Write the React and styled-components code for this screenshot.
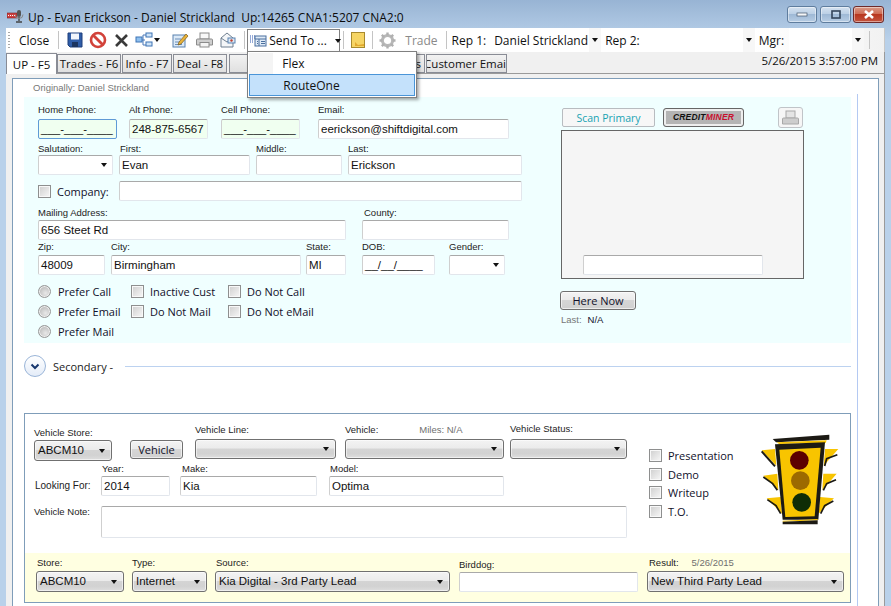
import React from 'react';
import styled, { createGlobalStyle } from 'styled-components';

const Global = createGlobalStyle`
  html, body { margin: 0; padding: 0; background: #b9d1ea; overflow: hidden; }
  * { box-sizing: border-box; }
`;
const UI = '"Open Sans", "Noto Sans", sans-serif';
const ARIAL = '"Liberation Sans", Arial, sans-serif';

const Win = styled.div`
  width: 891px; height: 606px; overflow: hidden; display: flex; flex-direction: column;
  background: linear-gradient(#98b4d4 0, #b9d1ea 40px);
  font-family: ${UI}; color: #111;
`;
const TitleBar = styled.div`
  height: 28px; flex: none; display: flex; align-items: center; padding: 5px 7px 0 7px;
`;
const TitleText = styled.div`
  font-size: 12px; margin-left: 4px; white-space: pre; flex: 1; color: #0b0b0b; padding-top: 1px;
`;
const Caption = styled.div`
  width: ${p => p.$w}px; height: 17px; margin-left: ${p => p.$ml}px; margin-top: -5px; border-radius: 3px;
  border: 1px solid ${p => p.$close ? '#6e2a2a' : '#5f7d9e'};
  box-shadow: inset 0 0 0 1px rgba(255,255,255,.45);
  background: ${p => p.$close
    ? 'linear-gradient(#d99a88 0,#cf6d55 45%,#b8371f 50%,#c4543e 100%)'
    : 'linear-gradient(#d5e2f0 0,#bcd0e6 45%,#9fb9d6 50%,#b7cde4 100%)'};
  display: flex; align-items: center; justify-content: center;
`;
const Toolbar = styled.div`
  height: 24px; flex: none; margin: 0 6px; display: flex; align-items: center; padding-left: 2px;
  background: linear-gradient(90deg,#fff 0,#fff 85%,#f2f2f2 100%);
  font-size: 12px; border-right: 1px solid #c8c8c8; position: relative; z-index: 3;
`;
const Grip = styled.div`
  width: 2px; height: 16px; margin-right: 9px;
  background: repeating-linear-gradient(#a8a8a8 0,#a8a8a8 1px,transparent 1px,transparent 3px);
`;
const Sep = styled.div`
  width: 1px; height: 18px; background: #c4c4c4; flex: none; margin-left: ${p => p.$ml}px;
`;
const ToolText = styled.span`
  margin-left: ${p => p.$ml}px; white-space: nowrap; color: ${p => p.$off ? '#8a8a8a' : '#111'};
`;
const ToolIcon = styled.svg`
  flex: none; margin-left: ${p => p.$ml}px; display: block;
`;
const SendWrap = styled.div`
  position: relative; margin-left: 2px; width: 93px; height: 23px; margin-top: 1px;
  border: 1px solid #808080; border-bottom-color: #f0f0f0; background: #fff;
  display: flex; align-items: center; padding-left: 2px; z-index: 5;
`;
const Arrow = styled.i`
  display: block; flex: none; width: 0; height: 0; margin-left: ${p => p.$ml || 0}px;
  border-left: 3.5px solid transparent; border-right: 3.5px solid transparent; border-top: 4px solid #111;
`;
const Menu = styled.div`
  position: absolute; left: -1px; top: 21px; width: 170px; height: 47px; background: #fff;
  border: 1px solid #808080; box-shadow: 2px 2px 3px rgba(0,0,0,.35); padding: 1px;
  font-size: 12px; display: flex; flex-direction: column;
`;
const MenuItem = styled.div`
  height: ${p => p.$h}px; padding-left: 33px; display: flex; align-items: center;
  ${p => p.$on ? 'background:#c4e1fb;border:1px solid #4a95d8;' : 'background:linear-gradient(90deg,#f4f4f4 0,#f4f4f4 24px,#fff 24px);'}
`;
const Combo = styled.div`
  margin-left: ${p => p.$ml}px; width: ${p => p.$w}px; height: 24px; background: #fff; flex: none;
  padding-left: 3px; display: flex; align-items: center; white-space: nowrap;
`;
const ComboArrow = styled.div`
  width: ${p => p.$w || 12}px; height: 24px; background: #f7f7f7; flex: none;
  display: flex; align-items: center; justify-content: center;
`;

const Body = styled.div`
  flex: 1; margin: 0 6px; background: #f0f0f0; display: flex; flex-direction: column; min-height: 0;
  border-right: 1px solid #9a9a9a;
`;
const TabRow = styled.div`
  height: 21px; flex: none; display: flex; align-items: flex-end; position: relative; padding-top: 1px;
`;
const Tab = styled.div`
  flex: none; width: ${p => p.$w}px; margin-left: ${p => p.$ml || 0}px;
  height: ${p => p.$on ? 21 : 19}px; margin-bottom: ${p => p.$on ? -1 : 0}px;
  border: 1px solid #898c95; border-bottom: ${p => p.$on ? 'none' : '1px solid #898c95'};
  background: ${p => p.$on ? '#fff' : 'linear-gradient(#f2f2f2,#e0e0e0)'};
  font-size: 11.5px; display: flex; align-items: center; justify-content: ${p => p.$end ? 'flex-end' : 'center'};
  padding-right: ${p => p.$end ? 3 : 0}px;
  white-space: nowrap; position: relative; z-index: ${p => p.$on ? 2 : 1}; overflow: hidden;
`;
const Stamp = styled.div`
  margin-left: auto; margin-right: 6px; font-size: 11.5px; height: 20px; line-height: 16px;
`;
const PageFrame = styled.div`
  flex: 1; min-height: 0; border-top: 1px solid #9a9a9a; padding: 4px 5px 0 6px;
`;
const Page = styled.div`
  height: 100%; border: 1px solid #7f9db9; border-bottom: none; background: #fff; padding-right: 20px; overflow: hidden;
`;
const Original = styled.div`
  height: 15px; padding: 3px 0 0 20px; font: 9.5px/11px ${ARIAL}; color: #777;
`;
const Column = styled.div`
  border-right: 1px solid #b4c9f2; padding: 3px 6px 0 11px; height: 100%;
`;
const Panel = styled.div`
  display: flex; height: 246px; background: #f0ffff;
`;
const Left = styled.div`
  width: 550px; padding: 7px 0 0 14px; flex: none; display: flex; flex-direction: column;
`;
const Row = styled.div`
  display: flex; align-items: flex-start; margin-top: ${p => p.$mt || 0}px;
  margin-left: ${p => p.$ml || 0}px; height: ${p => p.$h ? p.$h + 'px' : 'auto'};
`;
const Field = styled.div`
  width: ${p => p.$w}px; flex: none; margin-left: ${p => p.$ml || 0}px; margin-top: ${p => p.$mt || 0}px;
  display: flex; flex-direction: column;
`;
const Label = styled.div`
  font: 9.5px/12px ${ARIAL}; height: 12px; white-space: nowrap; color: #1c1c1c;
  margin-bottom: ${p => p.$gap || 0}px; padding-left: ${p => p.$pl || 0}px;
  display: flex;
`;
const Muted = styled.span`
  color: #6f6f6f; margin-left: ${p => p.$ml}px;
`;
const Input = styled.div`
  height: ${p => p.$h || 20}px; width: ${p => p.$w ? p.$w + 'px' : 'auto'}; flex: none;
  margin-left: ${p => p.$ml || 0}px;
  background: ${p => p.$mint ? '#f0fff0' : '#fff'};
  border: 1px solid ${p => p.$focus ? '#5f9ad6' : '#e2e6ec'};
  border-top-color: ${p => p.$focus ? '#5f9ad6' : '#a9a9a9'};
  border-left-color: ${p => p.$focus ? '#5f9ad6' : '#cfcfcf'};
  border-radius: 2px; padding: 0 2px;
  font: 11.5px/18px ${ARIAL}; color: #111; white-space: nowrap; overflow: hidden;
`;
const DropBox = styled(Input)`
  display: flex; justify-content: flex-end; align-items: center; padding-right: 5px;
`;
const Select = styled.div`
  height: ${p => p.$h || 21}px; border: 1px solid #707070; border-radius: 3px; flex: none;
  background: linear-gradient(#f3f3f3 0,#ebebeb 45%,#d4d4d4 50%,#d2d2d2 75%,#dedede 100%);
  box-shadow: inset 0 0 0 1px rgba(255,255,255,.55);
  display: flex; align-items: center; justify-content: space-between; padding: 0 6px 0 3px;
  font: 11.5px/1 ${ARIAL}; color: #111; white-space: nowrap;
`;
const Inline = styled.div`
  display: flex; align-items: center; flex: none; font-size: 11px; height: ${p => p.$h || 20}px;
  width: ${p => p.$w ? p.$w + 'px' : 'auto'}; margin-left: ${p => p.$ml || 0}px; margin-top: ${p => p.$mt || 0}px;
  white-space: nowrap; color: #10102a;
`;
const InlineText = styled.span` margin-left: ${p => p.$ml}px; `;
const Check = styled.span`
  width: 13px; height: 13px; flex: none; display: block; border: 1px solid #8e8f8f; padding: 1px;
  background: #f8f8f8;
  &::before { content: ''; display: block; width: 100%; height: 100%; background: linear-gradient(135deg,#d2d2d2,#f4f4f4); }
`;
const Radio = styled.span`
  width: 13px; height: 13px; flex: none; display: block; border-radius: 50%; border: 1px solid #979797;
  background: radial-gradient(circle at 60% 65%,#e8e8e8 0,#c4c4c4 60%,#b4b4b4 100%);
  box-shadow: inset 0 0 0 1px #eee;
`;
const Right = styled.div`
  width: 246px; flex: none; margin-left: -14px; padding-top: 10px; display: flex; flex-direction: column;
`;
const ScanRow = styled.div`
  display: flex; align-items: center; height: 21px; padding-left: 2px;
`;
const ScanBtn = styled.div`
  width: 93px; height: 19px; border: 1px solid #b8bcc0; border-radius: 2px; background: #f7f7f7;
  color: #17a3b3; font-size: 10.5px; display: flex; align-items: center; justify-content: center;
`;
const MinerBtn = styled.div`
  width: 81px; height: 19px; margin-left: 8px; border: 1px solid #666; border-radius: 3px; background: #b4b4b4;
  box-shadow: inset 0 0 0 2px #eee;
  display: flex; align-items: center; justify-content: center;
  font: italic 900 8.5px/1 ${ARIAL}; color: #111; letter-spacing: .2px;
`;
const MinerRed = styled.span` color: #c8102e; `;
const PrintBtn = styled.div`
  width: 25px; height: 21px; margin-left: 34px; border: 1px solid #c0c4c8; border-radius: 3px; background: #f6f6f6;
  display: flex; align-items: center; justify-content: center;
`;
const ScanBox = styled.div`
  width: 243px; height: 149px; margin: 2px 0 0 1px; border: 1px solid #666; background: #f5f5f5;
  display: flex; align-items: flex-end; padding: 0 0 3px 21px;
`;
const HereNow = styled.div`
  width: 76px; height: 19px; margin-top: 12px; border: 1px solid #707070; border-radius: 3px;
  background: linear-gradient(#f3f3f3 0,#ebebeb 45%,#d6d6d6 50%,#d0d0d0 100%);
  box-shadow: inset 0 0 0 1px rgba(255,255,255,.6);
  display: flex; align-items: center; justify-content: center; font-size: 11px; color: #10102a;
`;
const LastLine = styled.div`
  font: 9.5px/12px ${ARIAL}; margin: 4px 0 0 1px; color: #777; display: flex;
`;
const LastVal = styled.span` color: #10102a; margin-left: 6px; `;
const SecRow = styled.div`
  height: 46px; display: flex; align-items: center; font-size: 11px; color: #222;
`;
const Expand = styled.div`
  width: 22px; height: 22px; border-radius: 50%; border: 1px solid #9ab5d8; flex: none;
  background: linear-gradient(#fff,#e4ecf8); display: flex; align-items: center; justify-content: center;
`;
const SecText = styled.span` margin-left: 7px; `;
const SecLine = styled.div` flex: 1; height: 1px; background: #bcd2f0; margin-left: 12px; `;
const Group = styled.div`
  margin-top: 24px; height: 190px; border: 1px solid #7f9db9; display: flex; flex-direction: column;
`;
const GroupTop = styled.div` height: 139px; flex: none; display: flex; `;
const GroupForm = styled.div`
  width: 602px; flex: none; padding: 9px 0 0 9px; display: flex; flex-direction: column;
`;
const Checks = styled.div`
  width: 111px; flex: none; margin-left: 22px; padding-top: 32px; display: flex; flex-direction: column;
`;
const Light = styled.svg`
  flex: none; width: 80px; height: 94px; margin-top: 19px; display: block;
`;
const Band = styled.div`
  flex: 1; background: #ffffe1; padding: 4px 0 0 11px; display: flex; align-items: flex-start;
`;

const Ic = {
  Save: () => <ToolIcon $ml={8} width="16" height="16" viewBox="0 0 16 16"><path d="M1 1h14v14H3l-2-2z" fill="#2f5da8" stroke="#1e3f7a"/><rect x="4" y="1.5" width="8" height="6" fill="#f2f6fc"/><rect x="5" y="10" width="6" height="5" fill="#1c3560"/></ToolIcon>,
  No: () => <ToolIcon $ml={6} width="18" height="18" viewBox="0 0 18 18"><circle cx="9" cy="9" r="7" fill="#fff" stroke="#d2423a" strokeWidth="2.6"/><path d="M4 4l10 10" stroke="#d2423a" strokeWidth="2.8"/></ToolIcon>,
  X: () => <ToolIcon $ml={7} width="15" height="15" viewBox="0 0 15 15"><path d="M2 2l11 11M13 2L2 13" stroke="#3a3a3a" strokeWidth="2.6"/></ToolIcon>,
  Flow: () => <ToolIcon $ml={6} width="18" height="16" viewBox="0 0 18 16"><path d="M6 8h4M8 3v10M8 3h3M8 13h3" stroke="#4a78b8" fill="none"/><rect x="1" y="5" width="6" height="5" fill="#8fc0ef" stroke="#3f74b5"/><rect x="11" y="1" width="6" height="4" fill="#cfe4f8" stroke="#3f74b5"/><rect x="11" y="10" width="6" height="4" fill="#cfe4f8" stroke="#3f74b5"/></ToolIcon>,
  Edit: () => <ToolIcon $ml={12} width="17" height="16" viewBox="0 0 17 16"><rect x="1" y="3" width="12" height="12" fill="#dbe9f7" stroke="#5a82b0"/><path d="M3 7h6M3 10h5M3 12.5h7" stroke="#6d8fb8"/><path d="M7 10l7-8 2 2-7 8-3 1z" fill="#e8b23a" stroke="#7a5a18" strokeWidth=".7"/></ToolIcon>,
  Print: ({ ml = 7 }) => <ToolIcon $ml={ml} width="17" height="16" viewBox="0 0 17 16"><rect x="4" y="1" width="9" height="6" fill="#f8f8f8" stroke="#8b8b8b"/><path d="M1.5 7h14a1 1 0 0 1 1 1v5h-16V8a1 1 0 0 1 1-1z" fill="#cfcfcf" stroke="#8b8b8b"/><rect x="4" y="10.5" width="9" height="4.5" fill="#f4f4f4" stroke="#8b8b8b"/></ToolIcon>,
  Mail: () => <ToolIcon $ml={6} width="17" height="16" viewBox="0 0 17 16"><path d="M2 6l6-5 6 5v9H2z" fill="#f4f6f8" stroke="#6f7f90"/><path d="M2 6l6 4 6-4" fill="none" stroke="#6f7f90"/><rect x="9" y="6" width="7" height="5" fill="#dce8f4" stroke="#5a82b0"/><circle cx="12.5" cy="8.5" r="1.2" fill="#c04030"/></ToolIcon>,
  Send: () => <ToolIcon $ml={0} width="17" height="12" viewBox="0 0 17 12"><path d="M0 1h1M2 1h1M4 1h1M0 3h1M2 3h1M4 3h1M0 5h1M2 5h1M0 7h1M2 7h1" stroke="#2b55b0" /><rect x="5" y="1" width="11" height="10" fill="#dfeaf6" stroke="#4a6f9e"/><path d="M5 4h11M9 4v7M7 6.5h1M7 8.5h1M11 6.5h4M11 8.5h4" stroke="#4a6f9e"/></ToolIcon>,
  Note: () => <ToolIcon $ml={7} width="14" height="16" viewBox="0 0 14 16"><rect x=".5" y=".5" width="13" height="15" fill="#f6d565" stroke="#a88a2e"/><path d="M4 10l3 3 6-1v2H4z" fill="#e2a92e"/></ToolIcon>,
  Gear: () => <ToolIcon $ml={6} width="17" height="17" viewBox="0 0 17 17"><path d="M8.5 3.4a5.1 5.1 0 1 0 0 10.2 5.1 5.1 0 0 0 0-10.2z" fill="none" stroke="#b8b8b8" strokeWidth="3"/><path d="M8.5 0.5v3M8.5 13.5v3M0.5 8.5h3M13.5 8.5h3M2.8 2.8l2.2 2.2M12 12l2.2 2.2M14.2 2.8L12 5M5 12l-2.2 2.2" stroke="#b0b0b0" strokeWidth="2.4"/></ToolIcon>,
};

function Fld({ label, w, ml, mt, gap, pl, h, value, mint, focus }) {
  return (
    <Field $w={w} $ml={ml} $mt={mt}>
      <Label $gap={gap} $pl={pl}>{label}</Label>
      <Input $h={h} $mint={mint} $focus={focus}>{value}</Input>
    </Field>
  );
}
function Sel({ label, w, ml, mt, gap, pl, h, value }) {
  return (
    <Field $w={w} $ml={ml} $mt={mt}>
      <Label $gap={gap} $pl={pl}>{label}</Label>
      <Select $h={h}><span>{value}</span><Arrow /></Select>
    </Field>
  );
}
const CheckOpt = ({ children, w, ml, gap = 6, h }) => (
  <Inline $w={w} $ml={ml} $h={h}><Check /><InlineText $ml={gap}>{children}</InlineText></Inline>
);
const RadioOpt = ({ children, w }) => (
  <Inline $w={w}><Radio /><InlineText $ml={7}>{children}</InlineText></Inline>
);

export default function App() {
  return (
    <Win>
      <Global />
      <TitleBar>
        <svg width="17" height="15" viewBox="0 0 17 15" style={{ flex: 'none', marginTop: -1 }}>
          <rect x="0" y="4" width="10" height="5" fill="#d04040" stroke="#7a2020" strokeWidth=".6" />
          <path d="M1 6.5h8" stroke="#fff" strokeDasharray="1 1" />
          <rect x="10" y="1" width="4" height="7" rx="2" fill="#555" />
          <path d="M12 8v4M9 13h6" stroke="#444" strokeWidth="1.4" />
          <path d="M8 5.5a4 4 0 0 0 8 0" fill="none" stroke="#888" />
        </svg>
        <TitleText>{'Up - Evan Erickson - Daniel Strickland  Up:14265 CNA1:5207 CNA2:0'}</TitleText>
        <Caption $w={30} $ml={0}>
          <svg width="12" height="6" viewBox="0 0 12 6"><rect x="1" y="2" width="10" height="3" fill="#f4f6f8" stroke="#44556a" strokeWidth=".7" /></svg>
        </Caption>
        <Caption $w={31} $ml={3}>
          <svg width="10" height="9" viewBox="0 0 10 9"><rect x="1" y="1" width="8" height="7" fill="none" stroke="#33445a" strokeWidth="1.6" /></svg>
        </Caption>
        <Caption $w={31} $ml={2} $close>
          <svg width="12" height="9" viewBox="0 0 12 9"><path d="M2 1l8 7M10 1L2 8" stroke="#fff" strokeWidth="2.6" /></svg>
        </Caption>
      </TitleBar>

      <Toolbar>
        <Grip />
        <ToolText $ml={0}>Close</ToolText>
        <Sep $ml={9} />
        <Ic.Save /><Ic.No /><Ic.X /><Ic.Flow />
        <Arrow $ml={1} />
        <Ic.Edit /><Ic.Print /><Ic.Mail />
        <Sep $ml={8} />
        <SendWrap>
          <Ic.Send />
          <ToolText $ml={2}>Send To ...</ToolText>
          <Arrow $ml={8} />
          <Menu>
            <MenuItem $h={22}>Flex</MenuItem>
            <MenuItem $h={22} $on>RouteOne</MenuItem>
          </Menu>
        </SendWrap>
        <Sep $ml={3} />
        <Ic.Note />
        <Sep $ml={7} />
        <Ic.Gear />
        <ToolText $ml={9} $off>Trade</ToolText>
        <Sep $ml={8} />
        <ToolText $ml={5}>Rep 1:</ToolText>
        <Combo $ml={5} $w={98}>Daniel Strickland</Combo>
        <ComboArrow><Arrow /></ComboArrow>
        <ToolText $ml={4}>Rep 2:</ToolText>
        <Combo $ml={5} $w={98} />
        <ComboArrow><Arrow /></ComboArrow>
        <ToolText $ml={4}>Mgr:</ToolText>
        <Combo $ml={5} $w={63} />
        <ComboArrow><Arrow /></ComboArrow>
        <Sep $ml={5} />
      </Toolbar>

      <Body>
        <TabRow>
          <Tab $w={51} $on>UP - F5</Tab>
          <Tab $w={64}>Trades - F6</Tab>
          <Tab $w={50} $ml={1}>Info - F7</Tab>
          <Tab $w={54} $ml={1}>Deal - F8</Tab>
          <Tab $w={112} $ml={2}>Notes - F9</Tab>
          <Tab $w={84} $end>Appointments</Tab>
          <Tab $w={81} $ml={1}>Customer Email</Tab>
          <Stamp>5/26/2015 3:57:00 PM</Stamp>
        </TabRow>
        <PageFrame>
          <Page>
            <Original>Originally: Daniel Strickland</Original>
            <Column>
              <Panel>
                <Left>
                  <Row>
                    <Fld label="Home Phone:" w={79} gap={3} value="___-___-____" mint focus />
                    <Fld label="Alt Phone:" w={79} ml={12} gap={3} value="248-875-6567" mint />
                    <Fld label="Cell Phone:" w={79} ml={13} gap={3} value="___-___-____" mint />
                    <Fld label="Email:" w={191} ml={18} gap={3} value="eerickson@shiftdigital.com" />
                  </Row>
                  <Row $mt={4}>
                    <Field $w={75}>
                      <Label>Salutation:</Label>
                      <DropBox><Arrow /></DropBox>
                    </Field>
                    <Fld label="First:" w={131} ml={6} pl={1} value="Evan" />
                    <Fld label="Middle:" w={86} ml={6} value="" />
                    <Fld label="Last:" w={174} ml={6} value="Erickson" />
                  </Row>
                  <Row $mt={6}>
                    <Inline $w={81}><Check /><InlineText $ml={6}>Company:</InlineText></Inline>
                    <Input $w={403} />
                  </Row>
                  <Row $mt={6}>
                    <Fld label="Mailing Address:" w={308} gap={1} value="656 Steet Rd" />
                    <Fld label="County:" w={147} ml={16} pl={2} gap={1} value="" />
                  </Row>
                  <Row $mt={1}>
                    <Fld label="Zip:" w={67} gap={2} value="48009" />
                    <Fld label="City:" w={190} ml={6} gap={2} value="Birmingham" />
                    <Fld label="State:" w={40} ml={5} gap={2} value="MI" />
                    <Fld label="DOB:" w={73} ml={16} gap={2} value="__/__/____" />
                    <Field $w={56} $ml={14}>
                      <Label $gap={2}>Gender:</Label>
                      <DropBox><Arrow /></DropBox>
                    </Field>
                  </Row>
                  <Row $mt={6} $h={20}>
                    <RadioOpt w={93}>Prefer Call</RadioOpt>
                    <CheckOpt w={97}>Inactive Cust</CheckOpt>
                    <CheckOpt>Do Not Call</CheckOpt>
                  </Row>
                  <Row $h={20}>
                    <RadioOpt w={93}>Prefer Email</RadioOpt>
                    <CheckOpt w={97}>Do Not Mail</CheckOpt>
                    <CheckOpt>Do Not eMail</CheckOpt>
                  </Row>
                  <Row $h={20}><RadioOpt>Prefer Mail</RadioOpt></Row>
                </Left>
                <Right>
                  <ScanRow>
                    <ScanBtn>Scan Primary</ScanBtn>
                    <MinerBtn>CREDIT<MinerRed>MINER</MinerRed></MinerBtn>
                    <PrintBtn>
                      <svg width="17" height="16" viewBox="0 0 17 16">
                        <rect x="4" y="1" width="9" height="7" fill="#e4e4e4" stroke="#a8a8a8" />
                        <path d="M1.5 8h14a1 1 0 0 1 1 1v5h-16V9a1 1 0 0 1 1-1z" fill="#cdcdcd" stroke="#a8a8a8" />
                      </svg>
                    </PrintBtn>
                  </ScanRow>
                  <ScanBox><Input $w={180} /></ScanBox>
                  <HereNow>Here Now</HereNow>
                  <LastLine>Last:<LastVal>N/A</LastVal></LastLine>
                </Right>
              </Panel>
              <SecRow>
                <Expand>
                  <svg width="10" height="7" viewBox="0 0 10 7"><path d="M1.5 1.5L5 5l3.5-3.5" fill="none" stroke="#17376e" strokeWidth="2" /></svg>
                </Expand>
                <SecText>Secondary -</SecText>
                <SecLine />
              </SecRow>
              <Group>
                <GroupTop>
                  <GroupForm>
                    <Row>
                      <Sel label="Vehicle Store:" w={78} mt={4} gap={1} value="ABCM10" />
                      <Field $w={53} $ml={18} $mt={17}>
                        <HereNowSmall>Vehicle</HereNowSmall>
                      </Field>
                      <Sel label="Vehicle Line:" w={141} ml={12} mt={1} gap={3} h={20} value="" />
                      <Field $w={159} $ml={9} $mt={1}>
                        <Label $gap={3}>Vehicle:<Muted $ml={41}>Miles: N/A</Muted></Label>
                        <Select $h={20}><span /><Arrow /></Select>
                      </Field>
                      <Sel label="Vehicle Status:" w={117} ml={6} mt={0} gap={4} h={20} value="" />
                    </Row>
                    <Row $mt={2}>
                      <Inline $w={67} $mt={13} $h={20}><LookLabel>Looking For:</LookLabel></Inline>
                      <Fld label="Year:" w={69} gap={1} pl={1} value="2014" />
                      <Fld label="Make:" w={137} ml={10} gap={1} pl={2} value="Kia" />
                      <Fld label="Model:" w={175} ml={12} gap={1} pl={1} value="Optima" />
                    </Row>
                    <Row $mt={10}>
                      <Field $w={67}><Label>Vehicle Note:</Label></Field>
                      <Input $w={526} $h={32} />
                    </Row>
                  </GroupForm>
                  <Checks>
                    <CheckOpt h={18.7}>Presentation</CheckOpt>
                    <CheckOpt h={18.7}>Demo</CheckOpt>
                    <CheckOpt h={18.7}>Writeup</CheckOpt>
                    <CheckOpt h={18.7}>T.O.</CheckOpt>
                  </Checks>
                  <Light viewBox="360 40 240 282">
                    <path d="M398 58l170-13v15l-160 8z" fill="#1c1a14" />
                    <path d="M410 68l150-6-3 8-140 3z" fill="#f8c400" />
                    <path d="M365 92l40-4 4 50z" fill="#f8c400" />
                    <path d="M365 95l40 45" stroke="#1c1a14" strokeWidth="6" fill="none" />
                    <path d="M595 88l-40 0-4 50z" fill="#f8c400" />
                    <path d="M592 105l-32 12-6 22" stroke="#1c1a14" strokeWidth="5" fill="none" />
                    <path d="M370 168l42-6 3 50z" fill="#f8c400" />
                    <path d="M370 172l28 20 14 20" stroke="#1c1a14" strokeWidth="5" fill="none" />
                    <path d="M590 162l-40 0-3 50z" fill="#f8c400" />
                    <path d="M588 180l-28 12-10 20" stroke="#1c1a14" strokeWidth="5" fill="none" />
                    <path d="M380 236l42-4 4 50z" fill="#f8c400" />
                    <path d="M382 240l26 18 14 24" stroke="#1c1a14" strokeWidth="5" fill="none" />
                    <path d="M582 236l-42-4-4 50z" fill="#f8c400" />
                    <path d="M580 244l-26 14-12 24" stroke="#1c1a14" strokeWidth="5" fill="none" />
                    <path d="M405 74l150-6-20 232-107 0z" fill="#1c1a14" />
                    <path d="M418 90l124-6-18 206-88 2z" fill="#f8c400" />
                    <circle cx="478" cy="122" r="28" fill="#5c0000" />
                    <circle cx="481" cy="183" r="28" fill="#9c6a00" />
                    <circle cx="485" cy="248" r="28" fill="#0f2d06" />
                    <path d="M428 303l105-5v4l-105 4z" fill="#f8c400" />
                    <path d="M428 306l105-4v12h-105z" fill="#1c1a14" />
                  </Light>
                </GroupTop>
                <Band>
                  <Sel label="Store:" w={88} gap={2} pl={1} value="ABCM10" />
                  <Sel label="Type:" w={75} ml={8} gap={2} value="Internet" />
                  <Sel label="Source:" w={235} ml={8} gap={2} pl={1} value="Kia Digital - 3rd Party Lead" />
                  <Fld label="Birddog:" w={179} ml={9} mt={2} gap={1} value="" />
                  <Field $w={197} $ml={9}>
                    <Label $gap={2} $pl={2}>Result:<Muted $ml={13}>5/26/2015</Muted></Label>
                    <Select><span>New Third Party Lead</span><Arrow /></Select>
                  </Field>
                </Band>
              </Group>
            </Column>
          </Page>
        </PageFrame>
      </Body>
    </Win>
  );
}

const HereNowSmall = styled(HereNow)`
  width: 53px; margin-top: 0;
`;
const LookLabel = styled.span`
  font: 10px/1 ${ARIAL}; margin-left: 1px; color: #1c1c1c;
`;
